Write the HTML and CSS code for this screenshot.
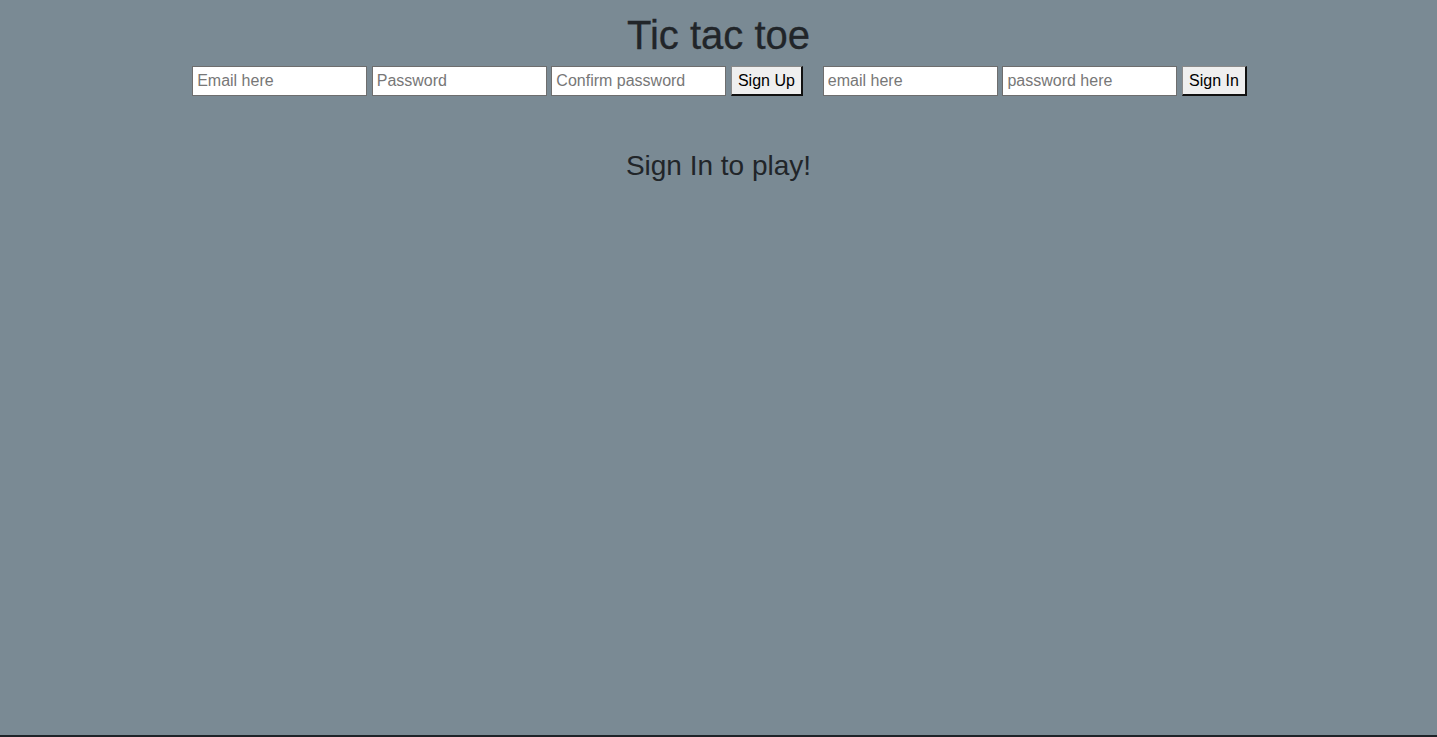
FILE: index.html
```html
<!DOCTYPE html>
<html lang="en">
<head>
<meta charset="utf-8">
<title>Tic tac toe</title>
<link rel="stylesheet" href="styles.css">
</head>
<body>
<div class="page">
  <h1 class="title">Tic tac toe</h1>
  <div class="auth">
    <form class="auth-form">
      <input class="field" type="email" placeholder="Email here">
      <input class="field" type="password" placeholder="Password">
      <input class="field" type="password" placeholder="Confirm password">
      <button class="btn" type="button">Sign Up</button>
    </form>
    <form class="auth-form">
      <input class="field" type="email" placeholder="email here">
      <input class="field" type="password" placeholder="password here">
      <button class="btn" type="button">Sign In</button>
    </form>
  </div>
  <h3 class="message">Sign In to play!</h3>
</div>
</body>
</html>
```

FILE: styles.css
```css
html, body {
  margin: 0;
  padding: 0;
}
body {
  background: #7a8a94;
  font-family: "Liberation Sans", Arial, sans-serif;
  color: #212529;
}
.page {
  box-sizing: border-box;
  min-height: 737px;
  padding-top: 11px;
  text-align: center;
  border-bottom: 2px solid #1e2328;
}
.title {
  margin: 0 0 7px;
  font-size: 40px;
  font-weight: 500;
  line-height: 1.2;
  -webkit-text-stroke: 0.3px #212529;
}
.auth {
  display: flex;
  justify-content: center;
  gap: 20px;
  padding-left: 2px;
}
.auth-form {
  display: flex;
  gap: 4.6px;
  margin: 0;
}
.field {
  box-sizing: border-box;
  width: 175px;
  height: 30px;
  margin: 0;
  padding: 1px 4px;
  border: 1px solid #6e6e6e;
  background: #fff;
  font-family: "Liberation Sans", Arial, sans-serif;
  font-size: 16px;
  color: #000;
}
.field::placeholder {
  color: #777;
}
.btn {
  box-sizing: border-box;
  height: 30px;
  margin: 0;
  padding: 0 6px;
  background: #efefef;
  border-style: solid;
  border-width: 1px 2px 2px 1px;
  border-color: #8a8a8a #111 #111 #8a8a8a;
  font-family: "Liberation Sans", Arial, sans-serif;
  font-size: 16px;
  color: #000;
}
.message {
  margin: 53px 0 0;
  font-size: 28px;
  font-weight: 500;
  line-height: 1.2;
}
```
